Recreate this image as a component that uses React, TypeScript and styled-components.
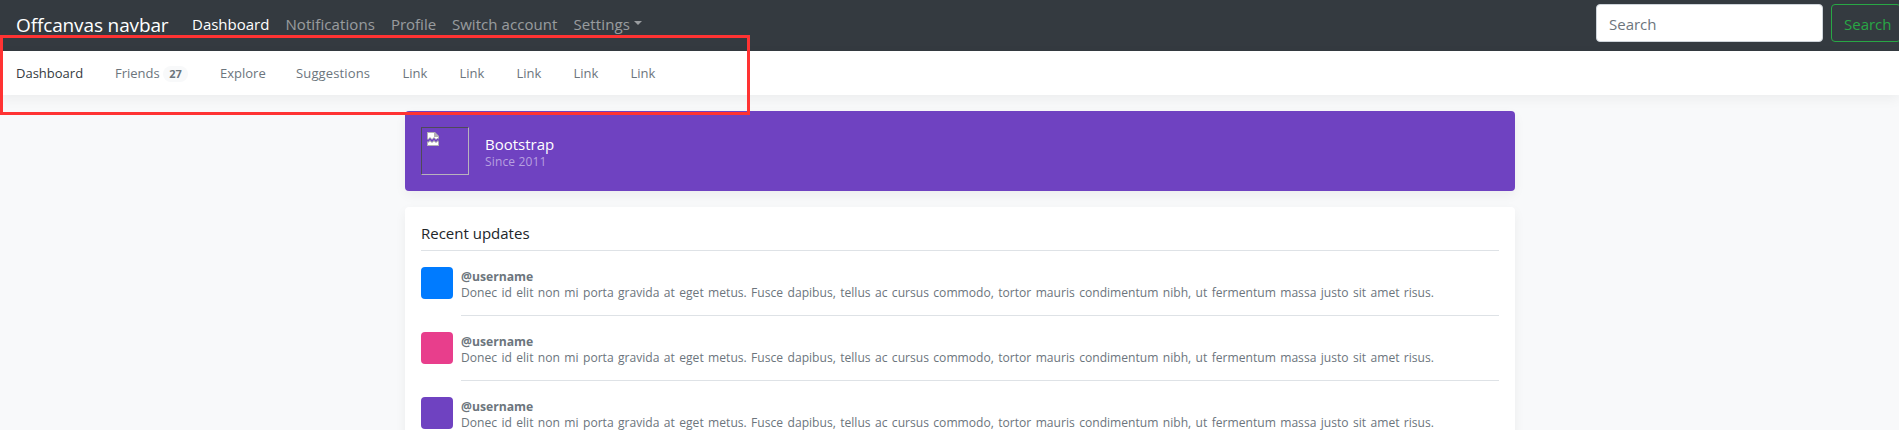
import React from "react";
import styled, { createGlobalStyle } from "styled-components";

const Global = createGlobalStyle`
  *, *::before, *::after { box-sizing: border-box; }
  html { overflow: hidden; }
  body {
    margin: 0;
    height: 430px;
    overflow: hidden;
    background: #f8f9fa;
    color: #212529;
    font-family: "Segoe UI", "Open Sans", "Noto Sans", sans-serif;
    font-size: 15px;
    line-height: 24px;
  }
`;

const Page = styled.div`
  position: relative;
  height: 430px;
  overflow: hidden;
`;

const Navbar = styled.nav`
  display: flex;
  align-items: center;
  height: 51px;
  padding: 4px 16px 9px;
  background: #343a40;
`;

const Brand = styled.a`
  width: 152px;
  margin-right: 16px;
  padding-top: 3px;
  color: #fff;
  font-size: 19px;
  letter-spacing: -0.13px;
  line-height: 30px;
  white-space: nowrap;
`;

const NavList = styled.div`
  display: flex;
  flex: 1;
`;

const NavLink = styled.a<{ $w: number; $active?: boolean; $ls?: number }>`
  display: flex;
  align-items: center;
  width: ${(p) => p.$w + 16}px;
  padding: 10px 8px 8px;
  color: ${(p) => (p.$active ? "#fff" : "rgba(255, 255, 255, 0.5)")};
  letter-spacing: ${(p) => p.$ls ?? 0}px;
  white-space: nowrap;
`;

const Caret = styled.span`
  margin: -2px 0 0 4px;
  border-top: 4.8px solid;
  border-left: 4.8px solid transparent;
  border-right: 4.8px solid transparent;
`;

const SearchForm = styled.form`
  display: flex;
  flex: none;
  gap: 8px;
  margin-right: -18px;
`;

const SearchInput = styled.input`
  width: 227px;
  height: 38px;
  padding: 8px 12px 6px;
  border: 1px solid #ced4da;
  border-radius: 4px;
  background: #fff;
  font: inherit;
  &::placeholder { color: #6c757d; opacity: 1; }
`;

const SearchButton = styled.button`
  width: 70px;
  height: 38px;
  padding: 7px 12px 5px;
  border: 1px solid #28a745;
  border-radius: 4px;
  background: transparent;
  color: #28a745;
  font: inherit;
  text-align: left;
`;

const Scroller = styled.nav`
  display: flex;
  align-items: center;
  height: 44px;
  background: #fff;
  box-shadow: 0 4px 12px rgba(0, 0, 0, 0.05);
`;

const SubLink = styled.a<{ $w: number; $active?: boolean; $ls?: number }>`
  display: flex;
  align-items: center;
  width: ${(p) => p.$w + 32}px;
  padding: 0 16px;
  color: ${(p) => (p.$active ? "#343a40" : "#6c757d")};
  font-size: 13px;
  letter-spacing: ${(p) => p.$ls ?? 0}px;
  white-space: nowrap;
`;

const Badge = styled.span`
  width: 25px;
  height: 16px;
  margin: 1px 0 0 auto;
  border-radius: 8px;
  background: #f8f9fa;
  font-size: 11px;
  font-weight: 700;
  line-height: 16px;
  text-align: center;
`;

const Container = styled.main`
  display: flex;
  flex-direction: column;
  gap: 16px;
  width: 1110px;
  margin: 16px 0 0 405px;
`;

const Hero = styled.header`
  display: flex;
  align-items: center;
  gap: 16px;
  height: 80px;
  padding: 16px;
  border-radius: 4px;
  background: #6f42c1;
  color: #fff;
  box-shadow: 0 4px 12px rgba(0, 0, 0, 0.05);
`;

const LogoFrame = styled.div`
  width: 48px;
  height: 48px;
  padding: 4px 5px;
  border: 1px solid;
  border-color: #4f4a58 #b8b3bd #b8b3bd #4f4a58;
`;

const BrokenIcon = styled.svg`
  display: block;
`;

const HeroText = styled.div`
  padding-top: 2px;
`;

const HeroTitle = styled.h6`
  margin: 0;
  font-size: 15px;
  font-weight: 400;
  line-height: 19px;
`;

const HeroSub = styled.small`
  display: block;
  color: #b7a0e0;
  font-size: 12px;
  letter-spacing: 0.15px;
  line-height: 15px;
`;

const Card = styled.section`
  padding: 16px 16px 0;
  height: 320px;
  border-radius: 4px;
  background: #fff;
  box-shadow: 0 4px 12px rgba(0, 0, 0, 0.05);
`;

const CardTitle = styled.h6`
  height: 28px;
  margin: 0;
  border-bottom: 1px solid #dee2e6;
  font-size: 15px;
  font-weight: 400;
  line-height: 20px;
`;

const Update = styled.article`
  display: flex;
  gap: 8px;
  padding-top: 16px;
`;

const Avatar = styled.span<{ $color: string }>`
  flex: none;
  width: 32px;
  height: 32px;
  border-radius: 4px;
  background: ${(p) => p.$color};
`;

const UpdateBody = styled.p`
  flex: 1;
  height: 49px;
  margin: 0;
  padding-top: 2px;
  border-bottom: 1px solid #dee2e6;
  color: #6c757d;
  font-size: 12.1px;
  word-spacing: 1.24px;
  line-height: 16px;
  white-space: nowrap;
`;

const UserName = styled.strong`
  display: block;
  font-size: 12.2px;
`;

const Highlight = styled.div`
  position: absolute;
  top: 35px;
  left: 0;
  width: 750px;
  height: 80px;
  border: 3px solid #ff3333;
  pointer-events: none;
`;

const updates = ["#007bff", "#e83e8c", "#6f42c1"];

export default function App() {
  return (
    <Page>
      <Global />
      <Navbar>
        <Brand>Offcanvas navbar</Brand>
        <NavList>
          <NavLink $w={77.4} $active>Dashboard</NavLink>
          <NavLink $w={89.5} $ls={0.1}>Notifications</NavLink>
          <NavLink $w={45}>Profile</NavLink>
          <NavLink $w={105.6} $ls={0.06}>Switch account</NavLink>
          <NavLink $w={70} $ls={0.12}>Settings<Caret /></NavLink>
        </NavList>
        <SearchForm>
          <SearchInput placeholder="Search" />
          <SearchButton type="button">Search</SearchButton>
        </SearchForm>
      </Navbar>
      <Scroller>
        <SubLink $w={67} $active>Dashboard</SubLink>
        <SubLink $w={73}>Friends<Badge>27</Badge></SubLink>
        <SubLink $w={44}>Explore</SubLink>
        <SubLink $w={74.5} $ls={0.14}>Suggestions</SubLink>
        {[0, 1, 2, 3, 4].map((i) => (
          <SubLink key={i} $w={25}>Link</SubLink>
        ))}
      </Scroller>
      <Container>
        <Hero>
          <LogoFrame>
            <BrokenIcon width="12" height="14" viewBox="0 0 12 14">
              <path d="M0 0H8L12 4V8L11 6L9 8L7 6L5 8L3 6L1 8L0 7Z" fill="#b4b0b4" />
              <path d="M1 1H7V5H11V6L9 7L7 5L5 7L3 5L1 7Z" fill="#fff" />
              <path d="M0 9L1 10L3 8L5 10L7 8L9 10L11 8L12 10V14H0Z" fill="#b4b0b4" />
              <path d="M1 11L3 9.5L5 11L7 9.5L9 11L11 9.5V13H1Z" fill="#fff" />
            </BrokenIcon>
          </LogoFrame>
          <HeroText>
            <HeroTitle>Bootstrap</HeroTitle>
            <HeroSub>Since 2011</HeroSub>
          </HeroText>
        </Hero>
        <Card>
          <CardTitle>Recent updates</CardTitle>
          {updates.map((color) => (
            <Update key={color}>
              <Avatar $color={color} />
              <UpdateBody>
                <UserName>@username</UserName>
                Donec id elit non mi porta gravida at eget metus. Fusce dapibus, tellus ac cursus commodo, tortor mauris condimentum nibh, ut fermentum massa justo sit amet risus.
              </UpdateBody>
            </Update>
          ))}
        </Card>
      </Container>
      <Highlight />
    </Page>
  );
}
